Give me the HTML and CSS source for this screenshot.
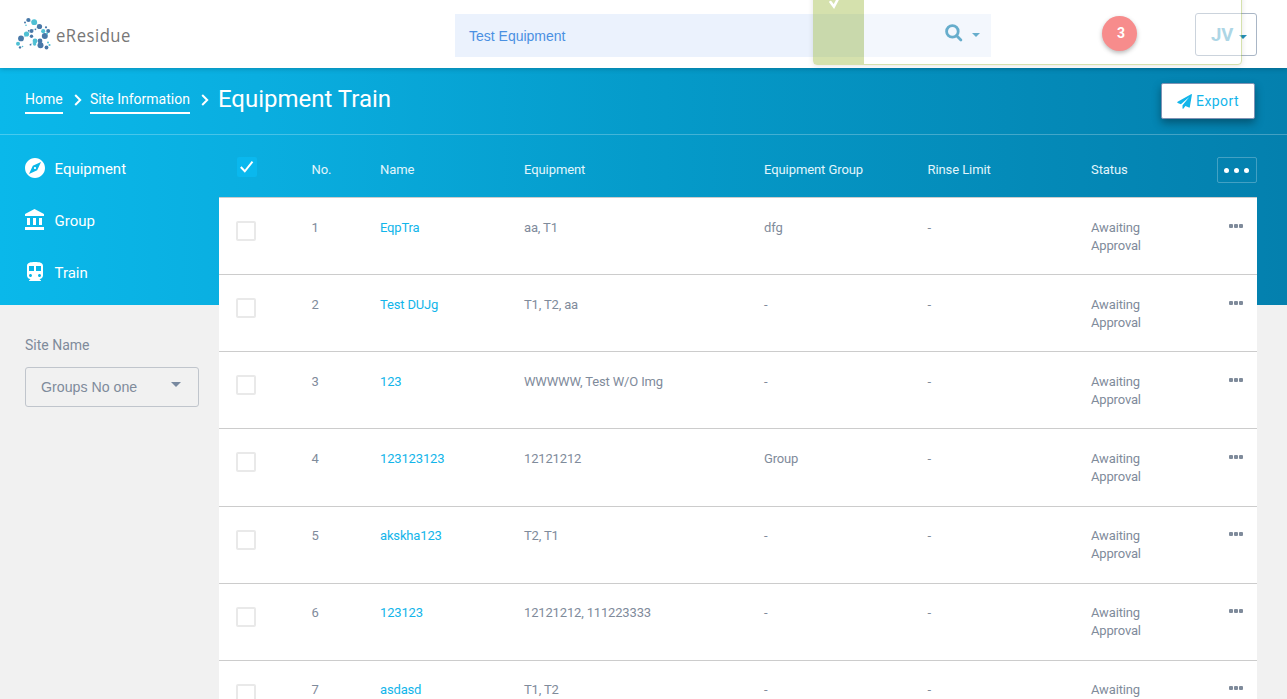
FILE: index.html
```html
<!DOCTYPE html>
<html lang="en">
<head>
<meta charset="utf-8">
<title>eResidue - Equipment Train</title>
<link rel="stylesheet" href="styles.css">
</head>
<body>
<header class="topbar">
  <div class="brand">
    <svg class="brand-mark" width="36" height="34" viewBox="0 0 36 34">
      <g stroke="#58a8c8" stroke-width=".4" fill="none"><path d="M10 3l8 2 6 4M14 14l5-2 4-3M5 22l6-4 4-4M19 24l-5 4"/></g>
      <g fill="#4878a8"><circle cx="12.4" cy="3" r="2.1"/><circle cx="9" cy="5.500" r="1"/><circle cx="23.500" cy="9.500" r="2.600"/><circle cx="15.500" cy="14" r="2"/><circle cx="19.500" cy="12.500" r=".8"/><circle cx="30" cy="10.300" r="1.100"/><circle cx="32.200" cy="14" r="2"/><circle cx="28.800" cy="19" r="3"/><circle cx="15.500" cy="19.300" r="1.700"/><circle cx="5" cy="21.400" r="2.900"/><circle cx="24" cy="24" r="2.400"/><circle cx="24.500" cy="28.300" r="3"/><circle cx="30.500" cy="30.500" r="1.900"/><circle cx="4" cy="30.400" r="1.200"/><circle cx="14.500" cy="27.700" r=".9"/><circle cx="12.700" cy="13.800" r=".9"/></g>
      <g fill="#4fc0d4"><circle cx="18.200" cy="5.200" r="2.900"/><circle cx="10" cy="8.300" r=".8"/><circle cx="27.200" cy="14.200" r="2.100"/><circle cx="31" cy="16.500" r="1"/><circle cx="10.500" cy="17" r="2.600"/><circle cx="2" cy="26.800" r="2"/><circle cx="19" cy="24" r="2.400"/><circle cx="18.600" cy="27" r="1.700"/><circle cx="32" cy="25.400" r="1"/><circle cx="33.500" cy="28" r="1.100"/><circle cx="6.500" cy="29.500" r=".8"/></g>
    </svg>
    <span class="brand-name">eResidue</span>
  </div>
  <div class="search">
    <span class="search-text">Test Equipment</span>
    <svg width="18" height="18" viewBox="0 0 18 18" class="search-icon"><circle cx="7.400" cy="7.400" r="5.800"/><path d="M11.700 11.700l4.200 4.200"/></svg>
    <span class="caret caret-search"></span>
  </div>
  <div class="badge">3</div>
  <div class="user"><span>JV</span><span class="caret caret-user"></span></div>
  <div class="toast">
    <div class="toast-strip"><svg width="14" height="14" viewBox="0 0 14 14"><path d="M2.500 7l3.400 4.500L11 2"/></svg></div>
  </div>
</header>
<main class="page">
  <nav class="crumbs">
    <a class="crumb">Home</a>
    <svg class="chev" width="8" height="12" viewBox="0 0 8 12"><path d="M1.200 1l5 5-5 5"/></svg>
    <a class="crumb">Site Information</a>
    <svg class="chev" width="8" height="12" viewBox="0 0 8 12"><path d="M1.200 1l5 5-5 5"/></svg>
    <h1 class="title">Equipment Train</h1>
    <button class="export"><svg width="15" height="15" viewBox="0 0 15 15"><path fill="currentColor" d="M14.400.1c.4 0 .6.3.5.7l-2.100 12.400c-.1.4-.4.6-.8.4L8.400 12.100 6.500 14.600c-.3.4-1 .2-1-.3V11.300L12.300 3 3.900 10.200.7 8.900c-.5-.2-.6-.8-.1-1.100L14 .2z"/></svg><span>Export</span></button>
  </nav>
  <div class="content">
    <aside class="side">
      <div class="menu">
        <a class="item"><svg width="24" height="24" viewBox="0 0 24 24"><path d="M12 10.900c-.610 0-1.100.490-1.100 1.100s.490 1.100 1.100 1.100c.610 0 1.100-.490 1.100-1.100s-.490-1.100-1.100-1.100zM12 2C6.480 2 2 6.480 2 12s4.480 10 10 10 10-4.480 10-10S17.520 2 12 2zm2.190 12.190L6 18l3.810-8.190L18 6l-3.810 8.190z"/></svg><span>Equipment</span></a>
        <a class="item"><svg width="24" height="24" viewBox="0 0 24 24"><path d="M4 10v7h3v-7H4zm6 0v7h3v-7h-3zM2 22h19v-3H2v3zm14-12v7h3v-7h-3zM11.500 1L2 6v2h19V6l-9.500-5z"/></svg><span>Group</span></a>
        <a class="item"><svg width="24" height="24" viewBox="0 0 24 24"><path d="M12 2c-4.420 0-8 .5-8 4v9.500C4 17.430 5.570 19 7.500 19L6 20.500v.5h12v-.5L16.500 19c1.930 0 3.500-1.570 3.500-3.500V6c0-3.500-3.580-4-8-4zM7.500 17c-.830 0-1.500-.670-1.500-1.500S6.670 14 7.500 14s1.500.670 1.500 1.500S8.330 17 7.500 17zm3.500-6H6V6h5v5zm5.500 6c-.830 0-1.500-.670-1.500-1.500s.670-1.500 1.500-1.500 1.500.670 1.500 1.500-.670 1.500-1.500 1.500zm1.500-6h-5V6h5v5z"/></svg><span>Train</span></a>
      </div>
      <div class="filter">
        <label class="label">Site Name</label>
        <div class="select"><span>Groups No one</span><span class="caret caret-select"></span></div>
      </div>
    </aside>
    <section class="table">
      <div class="row head">
        <span class="check-on"><svg width="16" height="14" viewBox="0 0 16 14"><path d="M1.800 7l4 4.300L13.500 1.700"/></svg></span>
        <span>No.</span><span>Name</span><span>Equipment</span><span>Equipment Group</span><span>Rinse Limit</span><span>Status</span>
        <span class="more"><i></i><i></i><i></i></span>
      </div>
      <div class="row"><span class="check"></span><span>1</span><a>EqpTra</a><span>aa, T1</span><span>dfg</span><span>-</span><span>Awaiting<br>Approval</span><span class="dots"><i></i><i></i><i></i></span></div>
      <div class="row"><span class="check"></span><span>2</span><a>Test DUJg</a><span>T1, T2, aa</span><span>-</span><span>-</span><span>Awaiting<br>Approval</span><span class="dots"><i></i><i></i><i></i></span></div>
      <div class="row"><span class="check"></span><span>3</span><a>123</a><span>WWWWW, Test W/O Img</span><span>-</span><span>-</span><span>Awaiting<br>Approval</span><span class="dots"><i></i><i></i><i></i></span></div>
      <div class="row"><span class="check"></span><span>4</span><a>123123123</a><span>12121212</span><span>Group</span><span>-</span><span>Awaiting<br>Approval</span><span class="dots"><i></i><i></i><i></i></span></div>
      <div class="row"><span class="check"></span><span>5</span><a>akskha123</a><span>T2, T1</span><span>-</span><span>-</span><span>Awaiting<br>Approval</span><span class="dots"><i></i><i></i><i></i></span></div>
      <div class="row"><span class="check"></span><span>6</span><a>123123</a><span>12121212, 111223333</span><span>-</span><span>-</span><span>Awaiting<br>Approval</span><span class="dots"><i></i><i></i><i></i></span></div>
      <div class="row"><span class="check"></span><span>7</span><a>asdasd</a><span>T1, T2</span><span>-</span><span>-</span><span>Awaiting</span><span class="dots"><i></i><i></i><i></i></span></div>
    </section>
  </div>
</main>
</body>
</html>
```
FILE: styles.css
```css
* { box-sizing: border-box; }
body { margin: 0; height: 699px; overflow: hidden; font-family: Roboto, sans-serif; font-size: 13px; color: #7f8b9b; background: #f1f1f1; }

.topbar { position: relative; z-index: 2; display: flex; align-items: flex-start; height: 68px; padding-right: 30px; background: #fff; box-shadow: 0 1px 5px rgba(0,0,0,.2); }
.brand { display: flex; width: 455px; padding: 17px 0 0 16px; }
.brand-name { height: 28px; margin: 4px 0 0 4px; font: 400 19px/28px "Open Sans", sans-serif; letter-spacing: .6px; color: #777; transform: scaleX(.875); transform-origin: left; }
.search { display: flex; align-items: center; width: 536px; height: 43px; margin-top: 14px; padding: 0 11px 0 14px; background: #ebf2fd; }
.search-text { flex: 1; font: 14px "Liberation Sans", Arial, sans-serif; color: #4a90e2; }
.search-icon { margin-top: -5px; fill: none; stroke: #0077aa; stroke-width: 2.800; stroke-linecap: round; }
.caret { width: 0; height: 0; border: 4px solid transparent; border-bottom: 0; border-top-color: #0077aa; }
.caret-search { margin: -1px 0 0 9px; }
.badge { width: 35px; height: 35px; margin: 16px 0 0 111px; padding-left: 3px; border-radius: 50%; background: #f33f3f; color: #fff; font: bold 14px/34px Roboto, sans-serif; text-align: center; box-shadow: 0 2px 4px rgba(0,0,0,.45); }
.user { display: flex; align-items: center; width: 62px; height: 43px; margin: 13px 0 0 auto; padding-left: 15px; border: 1px solid #a9b6c6; border-radius: 3px; color: #76bbd5; font-size: 18.500px; font-weight: 700; }
.user span:first-child { width: 28px; }
.caret-user { margin-top: 4px; border-top-color: #2590b8; }
.toast { position: absolute; left: 813px; top: -40px; width: 429px; height: 105px; opacity: .4; background: #fff; border: 1px solid #98b634; border-radius: 4px; box-shadow: 0 1px 5px rgba(0,0,0,.25); }
.toast-strip { width: 50px; height: 103px; padding: 34px 0 0 14px; background: #98b634; }
.toast-strip svg { display: block; fill: none; stroke: #fff; stroke-width: 2.600; stroke-linecap: round; }

.page { height: 631px; background: linear-gradient(90deg, #0ab8ea 0, #0aaee0 20%, #059bca 50%, #048ab8 80%, #0480ae 100%) 0 0 / 100% 237px no-repeat; }
.crumbs { display: flex; align-items: flex-start; height: 67px; padding: 0 32px 0 25px; border-bottom: 1px solid rgba(255,255,255,.25); }
.crumb { height: 46px; padding-top: 22px; border-bottom: 2px solid #fff; color: #fff; font-size: 14px; line-height: 19px; }
.chev { margin: 26px 8px 0 11.300px; fill: none; stroke: #fff; stroke-width: 2; }
.title { margin: 16px 0 0 .7px; color: #fff; font-size: 24px; font-weight: 400; line-height: 30px; }
.export { display: flex; align-items: center; gap: 4px; width: 94px; height: 36px; margin: 15px 0 0 auto; padding: 0 0 0 15px; border: 1px solid #7f93b5; border-radius: 2px; background: #fff; color: #12b5ea; font: 14px Roboto, sans-serif; letter-spacing: .45px; box-shadow: 0 4px 9px rgba(0,0,0,.35); }
.content { display: flex; height: 564px; overflow: hidden; }

.side { width: 219px; }
.menu { display: flex; flex-direction: column; gap: 28px; height: 170px; padding: 21px 0 0 23px; }
.item { display: flex; align-items: center; gap: 7.500px; height: 24px; color: #fff; font-size: 15px; }
.item span { padding-top: 2px; }
.item svg { fill: #fff; }
.filter { padding: 31px 20px 0 25px; }
.label { display: block; font-size: 14px; line-height: 19px; }
.select { display: flex; justify-content: space-between; align-items: center; height: 40px; margin-top: 12px; padding: 0 17px 0 15px; border: 1px solid #c0c5cc; border-radius: 3px; font: 14.200px "Liberation Sans", Arial, sans-serif; }
.caret-select { margin-top: -6px; border-width: 5px 5px 0; border-top-color: #7889a0; }

.table { width: 1038px; }
.row { display: grid; grid-template-columns: 75.500px 68.500px 144px 240px 163.500px 163.500px 1fr 15px; align-items: start; height: 77.100px; padding: 20.500px 13px 0 17px; border-top: 1px solid #ccc; background: #fff; line-height: 18px; letter-spacing: -.16px; }
.row a { color: #12b5ea; }
.head { grid-template-columns: 75.500px 68.500px 144px 240px 163.500px 163.500px 1fr 40px; height: 62.200px; padding: 26px 0 0 17px; border: 0; background: none; color: #e2f5fb; letter-spacing: -.08px; }
.check { width: 20px; height: 20px; margin-top: 2.500px; border: 2px solid #e9e9e9; border-radius: 2px; }
.check-on { display: flex; justify-content: center; align-items: center; width: 20px; height: 20px; margin: -4px 0 0 1px; border-radius: 2px; background: #0ab8ee; }
.check-on svg { fill: none; stroke: #fff; stroke-width: 2; }
.dots { display: flex; gap: 1px; padding-top: 5px; }
.dots i { width: 4px; height: 4px; border-radius: 1px; background: #7f8b9b; }
.more { display: flex; justify-content: center; align-items: center; gap: 5px; width: 40px; height: 26px; margin-top: -4px; padding-right: 1px; border: 1px solid rgba(255,255,255,.25); border-radius: 2px; }
.more i { width: 5px; height: 5px; border-radius: 50%; background: #fff; }
```
